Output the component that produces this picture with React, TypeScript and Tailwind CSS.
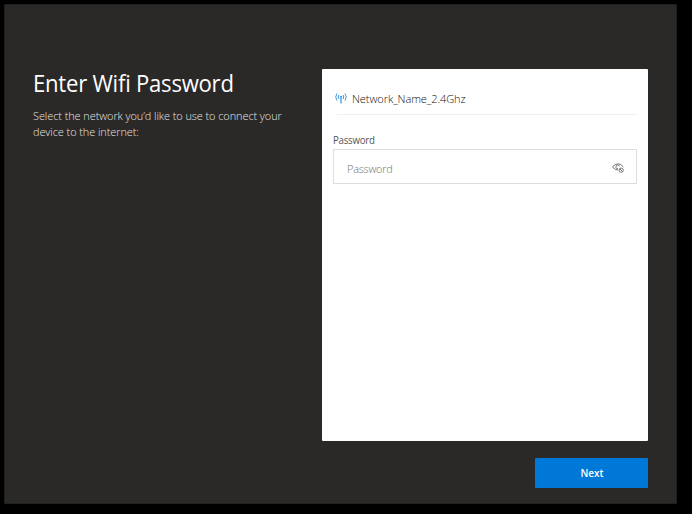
function AntennaIcon() {
  return (
    <svg viewBox="0 0 12 12" className="-mt-0.5 h-3 w-3 shrink-0" fill="none" stroke="#3c98e4" strokeWidth="1">
      <path d="M2 1.5Q-.6 5 2 8.5M3.9 3Q2.5 5 3.9 7M10 1.5Q12.6 5 10 8.5M8.1 3Q9.5 5 8.1 7" />
      <path d="M6 4.5V11.6" strokeWidth="1.3" />
      <circle cx="6" cy="4.7" r="0.6" />
    </svg>
  );
}

function EyeBlockedIcon() {
  return (
    <svg viewBox="0 0 12 10" className="mt-0.5 h-2.5 w-3 shrink-0" fill="none" stroke="#707070" strokeWidth="0.95">
      <path d="M.5 4Q3 .8 6 .8T11.4 4M.5 4Q3 7 6.1 7" />
      <path d="M7.6 3.4A1.9 1.9 0 1 0 6.1 5.8" />
      <circle cx="9.2" cy="7.2" r="2.1" />
      <path d="M7.8 5.8L10.6 8.6" />
    </svg>
  );
}

export default function App() {
  return (
    <div className="h-[514px] w-[692px] bg-black pt-1 pl-1 font-['Open_Sans','Noto_Sans',sans-serif]">
      <main className="flex h-[500px] w-[673px] rounded-[1px] border border-[#20201f] bg-[#2a2928] pt-16 pl-7">
        <section className="w-[289px] shrink-0 text-white">
          <h1 className="-mt-px h-[30px] origin-left scale-x-94 text-[23.5px] leading-[30px] font-normal whitespace-nowrap tracking-[-0.25px]">Enter Wifi Password</h1>
          <p className="mt-[10px] origin-left scale-x-95 text-[11.5px] leading-4 font-light whitespace-nowrap tracking-[-0.07px] text-[#e4e4e4]">
            Select the network you’d like to use to connect your
            <br />
            device to the internet:
          </p>
        </section>
        <div className="flex w-[326px] flex-col items-end">
          <section className="h-[372px] w-[326px] rounded-[1px] bg-white pt-5 pr-[11px] pl-[11px]">
            <div className="flex h-5 items-center gap-[5px] pl-[2px]">
              <AntennaIcon />
              <span className="origin-left scale-x-96 text-[11.5px] leading-5 font-light whitespace-nowrap tracking-[-0.1px] text-[#111]">Network_Name_2.4Ghz</span>
            </div>
            <div className="mt-[5px] ml-1 h-px bg-[#f0f0f0]" />
            <label className="mt-[17px] block h-4 origin-left scale-x-97 text-[10px] leading-4 font-normal tracking-[-0.25px] text-[#555]">Password</label>
            <div className="mt-[1px] flex h-[35px] items-center justify-between border border-[#dddddd] pr-[12px] pl-[13px]">
              <span className="origin-left scale-x-95 pt-[5px] text-[11.5px] leading-5 font-light tracking-[-0.25px] text-[#707070]">Password</span>
              <EyeBlockedIcon />
            </div>
          </section>
          <button className="mt-[17px] h-[30px] w-[113px] rounded-[1px] bg-[#0078d7] pl-px text-[10px] font-semibold text-white">Next</button>
        </div>
      </main>
    </div>
  );
}
